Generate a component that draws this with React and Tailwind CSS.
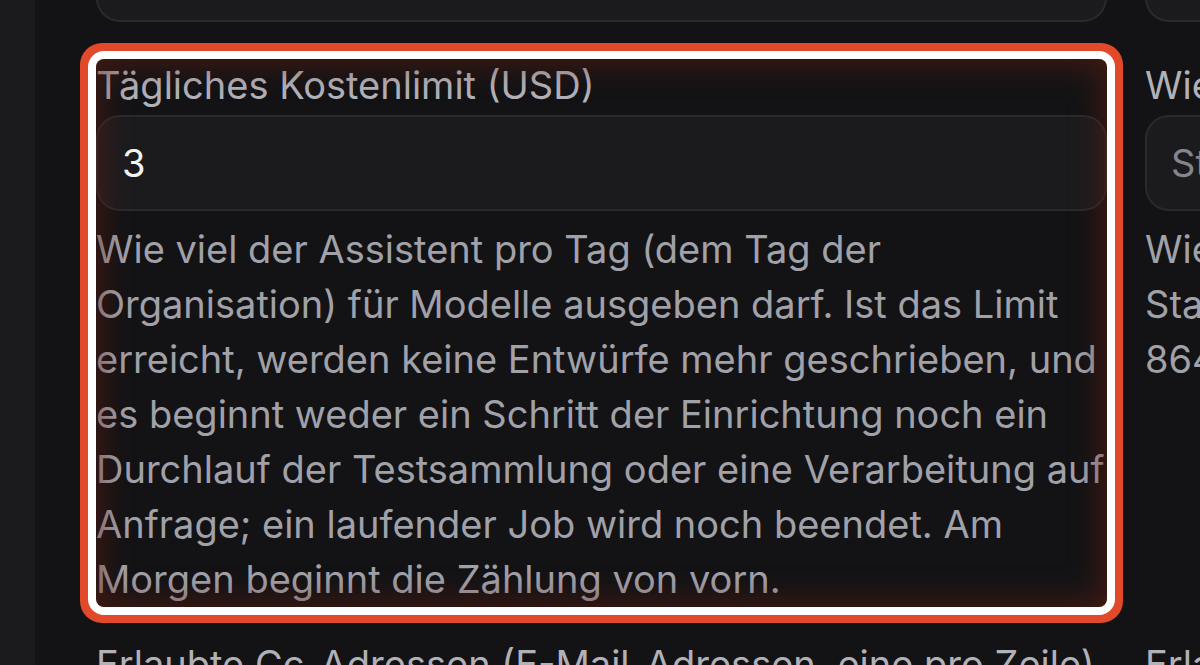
import React from "react";

const font = { fontFamily: "Inter, 'Noto Sans', sans-serif" };

function Field({ label, value, placeholder, help, highlight }) {
  return (
    <div className="relative flex flex-col">
      <label className="text-[38px] leading-[52px] text-[#b1b1b8] whitespace-nowrap">{label}</label>
      <div className="mt-[4px] h-[96px] rounded-[24px] border-2 border-[#2a2a2e] bg-[#1b1b1e] flex items-center px-[24px]">
        {value ? (
          <span className="text-[38px] text-[#f4f4f5]">{value}</span>
        ) : (
          <span className="text-[38px] text-[#85858d] whitespace-nowrap">{placeholder}</span>
        )}
      </div>
      <p className="mt-[11px] text-[38px] leading-[55px] text-[#a1a1aa]">{help}</p>
      {highlight && (
        // Hervorhebung: weißer und roter Rahmen mit rötlichem Schein nach innen
        <div className="pointer-events-none absolute inset-0 rounded-[8px] shadow-[0_0_0_8px_#ffffff,0_0_0_16px_#e2492b,inset_0_0_30px_6px_rgba(96,30,18,0.6)]" />
      )}
    </div>
  );
}

export default function App() {
  return (
    <div className="flex h-[665px] overflow-hidden bg-[#131315]" style={font}>
      {/* ── Seitenleiste ── */}
      <div className="w-[35px] shrink-0 bg-[#1b1b1e]" />

      {/* ── Formular ── */}
      <div className="flex-1 pl-[61px]">
        <div className="grid grid-cols-[1011px_1011px] gap-x-[38px] gap-y-[37px] -mt-[73px]">
          <div className="h-[95px] rounded-[24px] border-2 border-[#2a2a2e] bg-[#1b1b1e]" />
          <div className="h-[95px] rounded-[24px] border-2 border-[#2a2a2e] bg-[#1b1b1e]" />

          <Field
            highlight
            label="Tägliches Kostenlimit (USD)"
            value="3"
            help="Wie viel der Assistent pro Tag (dem Tag der Organisation) für Modelle ausgeben darf. Ist das Limit erreicht, werden keine Entwürfe mehr geschrieben, und es beginnt weder ein Schritt der Einrichtung noch ein Durchlauf der Testsammlung oder eine Verarbeitung auf Anfrage; ein laufender Job wird noch beendet. Am Morgen beginnt die Zählung von vorn."
          />
          <Field
            label="Wie lange ein Freigabelink gilt (Sekunden)"
            placeholder="Standard: 86400"
            help={
              <>
                Wie lange ein Freigabelink gültig bleibt.
                <br />
                Standard ist ein Tag, also
                <br />
                86400 Sekunden.
              </>
            }
          />

          <label className="-mt-[6px] text-[38px] leading-[52px] text-[#b1b1b8] whitespace-nowrap">
            Erlaubte Cc-Adressen (E-Mail-Adressen, eine pro Zeile)
          </label>
          <label className="-mt-[6px] text-[38px] leading-[52px] text-[#b1b1b8] whitespace-nowrap">
            Erlaubte Bcc-Adressen
          </label>
        </div>
      </div>
    </div>
  );
}
